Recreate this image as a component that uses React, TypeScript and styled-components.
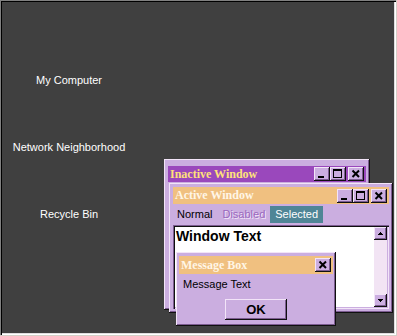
import React from "react";
import styled, { createGlobalStyle, css } from "styled-components";

const face = "#cbaee0";
const light = "#f2e4f8";
const shadow = "#7c5c90";
const black = "#101010";

const GlobalStyle = createGlobalStyle`
  html, body {
    margin: 0;
    padding: 0;
    background: #d4d0c8;
  }
  body {
    font-family: "Liberation Sans", Arial, sans-serif;
  }
`;

const raised = css`
  box-shadow: inset -1px -1px 0 ${black}, inset 1px 1px 0 ${light},
    inset -2px -2px 0 ${shadow};
`;

const Frame = styled.div`
  position: relative;
  width: 396px;
  height: 335px;
  box-sizing: border-box;
  background: #404040;
  box-shadow: inset 1px 1px 0 #808080, inset 2px 2px 0 #000000,
    inset -1px -1px 0 #ffffff, inset -2px -2px 0 #dfdfdf;
  overflow: hidden;
`;

const IconColumn = styled.div`
  display: flex;
  flex-direction: column;
  align-items: center;
  gap: 54px;
  width: 138px;
  padding-top: 74px;
`;

const IconLabel = styled.span`
  color: #ffffff;
  font-size: 11px;
  line-height: 13px;
  white-space: nowrap;
`;

const WindowFrame = styled.div<{
  $left: number;
  $top: number;
  $width: number;
  $height: number;
  $padTop: number;
  $pad: number;
}>`
  position: absolute;
  left: ${(p) => p.$left}px;
  top: ${(p) => p.$top}px;
  width: ${(p) => p.$width}px;
  height: ${(p) => p.$height}px;
  box-sizing: border-box;
  padding: ${(p) => p.$padTop}px ${(p) => p.$pad}px ${(p) => p.$pad}px;
  background: ${face};
  ${raised}
  display: flex;
  flex-direction: column;
`;

const TitleBar = styled.div<{ $bg: string; $color: string; $height: number }>`
  display: flex;
  align-items: center;
  flex-shrink: 0;
  height: ${(p) => p.$height}px;
  padding: 0 2px 0 2px;
  background: ${(p) => p.$bg};
  color: ${(p) => p.$color};
  font-family: "Liberation Serif", "Times New Roman", serif;
  font-weight: bold;
  font-size: 12px;
`;

const TitleText = styled.span`
  flex: 1;
  white-space: nowrap;
`;

const CaptionButton = styled.div<{ $gap?: boolean }>`
  width: 16px;
  height: 14px;
  margin-left: ${(p) => (p.$gap ? 2 : 0)}px;
  background: ${face};
  ${raised}
  display: flex;

  svg {
    display: block;
  }
`;

const MenuBar = styled.div`
  display: flex;
  flex-shrink: 0;
  height: 17px;
  margin: 2px 0 2px -1px;
  font-size: 11px;
`;

const MenuItem = styled.span<{ $state: "normal" | "disabled" | "selected" }>`
  padding: 0 5px;
  line-height: 17px;
  color: ${(p) =>
    p.$state === "disabled" ? "#9a68be" : p.$state === "selected" ? "#ffffff" : "#000000"};
  background: ${(p) => (p.$state === "selected" ? "#4f8596" : "transparent")};
  text-shadow: ${(p) => (p.$state === "disabled" ? `1px 1px 0 ${light}` : "none")};
`;

const Field = styled.div`
  flex: 1;
  display: flex;
  padding: 2px;
  background: #ffffff;
  box-shadow: inset 1px 1px 0 ${shadow}, inset 2px 2px 0 ${black},
    inset -1px -1px 0 ${light}, inset -2px -2px 0 ${face};
`;

const WindowText = styled.div`
  flex: 1;
  padding: 1px 1px;
  font-size: 14px;
  line-height: 16px;
  font-weight: bold;
  color: #000000;
`;

const ScrollBar = styled.div`
  width: 13px;
  display: flex;
  flex-direction: column;
  background: #f2e4f4;
`;

const ScrollTrack = styled.div`
  flex: 1;
`;

const ScrollButton = styled.div`
  width: 13px;
  height: 13px;
  background: ${face};
  ${raised}

  svg {
    display: block;
  }
`;

const MessageText = styled.div`
  padding: 4px 4px 0;
  font-size: 11px;
  line-height: 13px;
  color: #000000;
`;

const ButtonRow = styled.div`
  display: flex;
  justify-content: center;
  margin-top: 8px;
`;

const PushButton = styled.div`
  width: 62px;
  height: 21px;
  display: flex;
  align-items: center;
  justify-content: center;
  background: ${face};
  ${raised}
  font-size: 13px;
  font-weight: bold;
  color: #000000;
`;

const MinimizeGlyph = () => (
  <svg width="16" height="14" shapeRendering="crispEdges">
    <rect x="4" y="9" width="6" height="2" fill="#000" />
  </svg>
);

const MaximizeGlyph = () => (
  <svg width="16" height="14" shapeRendering="crispEdges">
    <rect x="3" y="2" width="9" height="2" fill="#000" />
    <rect x="3" y="2" width="1" height="9" fill="#000" />
    <rect x="11" y="2" width="1" height="9" fill="#000" />
    <rect x="3" y="10" width="9" height="1" fill="#000" />
  </svg>
);

const CloseGlyph = () => (
  <svg width="16" height="14">
    <path d="M4.5 3.5 L11 10 M11 3.5 L4.5 10" stroke="#000" strokeWidth="2" />
  </svg>
);

const ArrowGlyph = ({ down }: { down?: boolean }) => (
  <svg width="13" height="13" shapeRendering="crispEdges">
    {down ? (
      <path d="M4 5h5v1h-1v1h-1v1h-1v-1h-1v-1h-1z" fill="#000" />
    ) : (
      <path d="M6 5h1v1h1v1h1v1h-5v-1h1v-1h1z" fill="#000" />
    )}
  </svg>
);

const Captions = ({ full }: { full?: boolean }) => (
  <>
    {full && (
      <>
        <CaptionButton>
          <MinimizeGlyph />
        </CaptionButton>
        <CaptionButton>
          <MaximizeGlyph />
        </CaptionButton>
      </>
    )}
    <CaptionButton $gap={full}>
      <CloseGlyph />
    </CaptionButton>
  </>
);

export default function App() {
  return (
    <>
      <GlobalStyle />
      <Frame>
        <IconColumn>
          <IconLabel>My Computer</IconLabel>
          <IconLabel>Network Neighborhood</IconLabel>
          <IconLabel>Recycle Bin</IconLabel>
        </IconColumn>

        <WindowFrame $left={164} $top={159} $width={206} $height={151} $padTop={7} $pad={4}>
          <TitleBar $bg="#9a48bc" $color="#ffe27a" $height={16}>
            <TitleText>Inactive Window</TitleText>
            <Captions full />
          </TitleBar>
        </WindowFrame>

        <WindowFrame $left={169} $top={183} $width={224} $height={130} $padTop={4} $pad={4}>
          <TitleBar $bg="#f0c080" $color="#fff6e6" $height={17}>
            <TitleText>Active Window</TitleText>
            <Captions full />
          </TitleBar>
          <MenuBar>
            <MenuItem $state="normal">Normal</MenuItem>
            <MenuItem $state="disabled">Disabled</MenuItem>
            <MenuItem $state="selected">Selected</MenuItem>
          </MenuBar>
          <Field>
            <WindowText>Window Text</WindowText>
            <ScrollBar>
              <ScrollButton>
                <ArrowGlyph />
              </ScrollButton>
              <ScrollTrack />
              <ScrollButton>
                <ArrowGlyph down />
              </ScrollButton>
            </ScrollBar>
          </Field>
        </WindowFrame>

        <WindowFrame $left={176} $top={252} $width={160} $height={74} $padTop={4} $pad={3}>
          <TitleBar $bg="#f0c080" $color="#fff6e6" $height={18}>
            <TitleText>Message Box</TitleText>
            <Captions />
          </TitleBar>
          <MessageText>Message Text</MessageText>
          <ButtonRow>
            <PushButton>OK</PushButton>
          </ButtonRow>
        </WindowFrame>
      </Frame>
    </>
  );
}
